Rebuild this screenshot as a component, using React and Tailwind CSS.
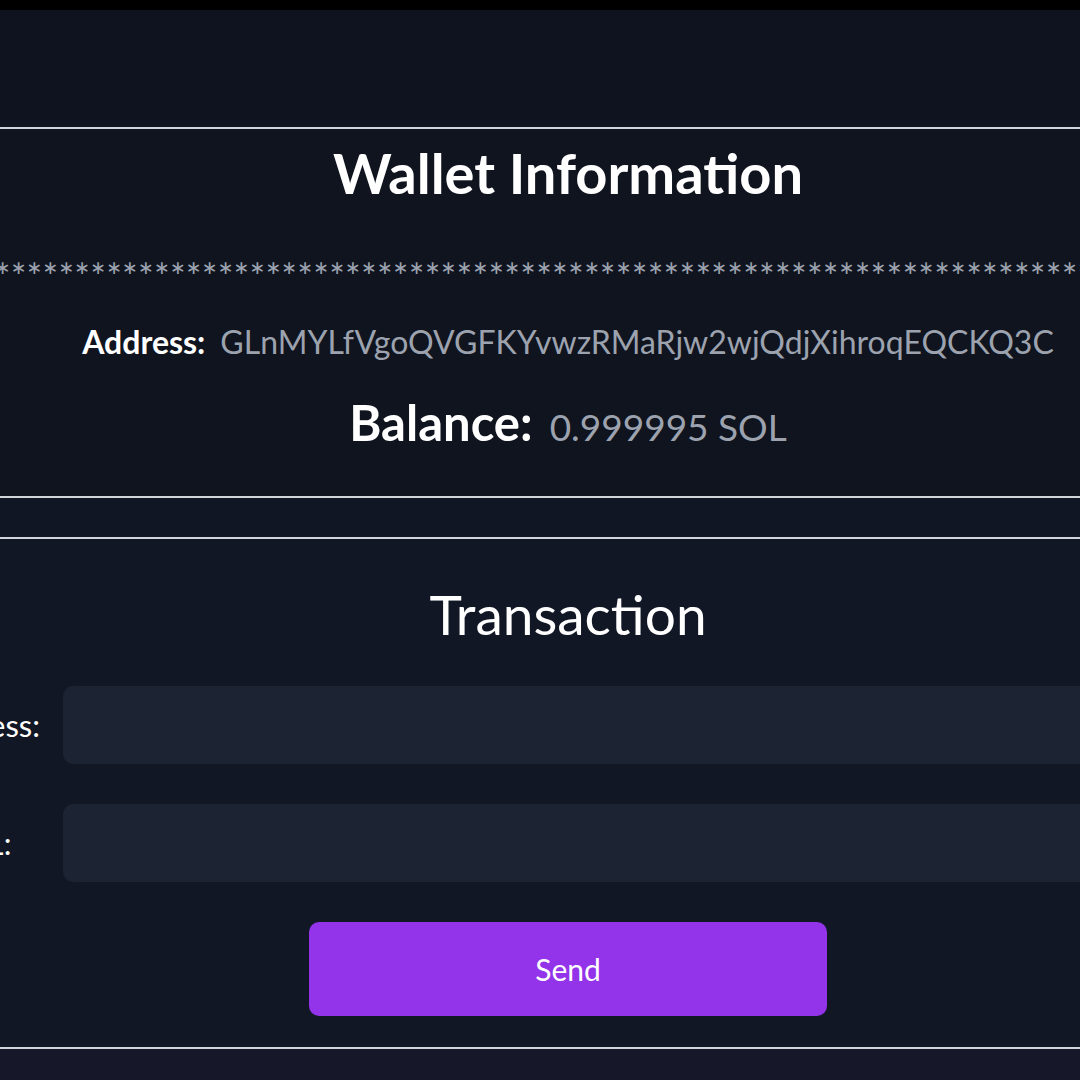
import React from "react";

const stars = "*".repeat(80);

export default function App() {
  return (
    <div className="w-[1080px] h-[1080px] overflow-hidden bg-[#10141f] text-white flex flex-col" style={{ fontFamily: "Lato, 'Noto Sans', sans-serif" }}>
      <div className="h-[10px] bg-black shrink-0" />
      <div className="h-[117px] bg-[#0f131f] shrink-0" />
      <div className="h-[2px] bg-[#d1d5db] shrink-0" />

      {/* Wallet info */}
      <section className="h-[367px] shrink-0 bg-[#10141f] flex flex-col items-center w-[1136px]">
        <h1 className="mt-[13px] text-[56px] font-bold leading-[62px]">Wallet Information</h1>
        <div className="mt-[57px] h-[30px] w-[1136px] flex justify-center overflow-hidden">
          <span className="whitespace-nowrap text-[#9ca3af] text-[37px] leading-[30px] tracking-[0.2px]">{stars}</span>
        </div>
        <div className="mt-[31px] flex items-baseline gap-[15px] text-[32px] leading-[40px]">
          <span className="font-bold">Address:</span>
          <span className="text-[#9ca3af]">GLnMYLfVgoQVGFKYvwzRMaRjw2wjQdjXihroqEQCKQ3C</span>
        </div>
        <div className="mt-[30px] flex items-baseline gap-[17px] leading-[60px]">
          <span className="font-bold text-[49px]">Balance:</span>
          <span className="text-[#9ca3af] text-[37px]">0.999995 SOL</span>
        </div>
      </section>

      <div className="h-[2px] bg-[#d1d5db] shrink-0" />
      <div className="h-[39px] bg-[#111624] shrink-0" />
      <div className="h-[2px] bg-[#d1d5db] shrink-0" />

      {/* Transaction */}
      <section className="h-[508px] shrink-0 bg-[#121726] flex flex-col w-[1136px]">
        <h2 className="mt-[43px] self-center text-[55px] leading-[64px] font-normal">Transaction</h2>
        <div className="mt-[40px] flex gap-[23px]">
          <div className="w-[40px] shrink-0 flex justify-end">
            <div className="flex flex-col gap-[40px] items-start">
              <label className="h-[78px] flex items-center whitespace-nowrap text-[31px]">Recipient Address:</label>
              <label className="h-[78px] flex items-center whitespace-nowrap text-[31px] tracking-[0.5px]">Amount in SOL:</label>
            </div>
          </div>
          <div className="flex flex-col gap-[40px]">
            <div className="h-[78px] w-[1200px] rounded-[10px] bg-[#1c2333]" />
            <div className="h-[78px] w-[1200px] rounded-[10px] bg-[#1c2333]" />
          </div>
        </div>
        <button className="mt-[40px] self-center w-[518px] h-[94px] rounded-[10px] bg-[#9333ea] text-[30px] text-white">Send</button>
      </section>

      <div className="h-[2px] bg-[#d1d5db] shrink-0" />
      <div className="flex-1 bg-[#17172a]" />
    </div>
  );
}
